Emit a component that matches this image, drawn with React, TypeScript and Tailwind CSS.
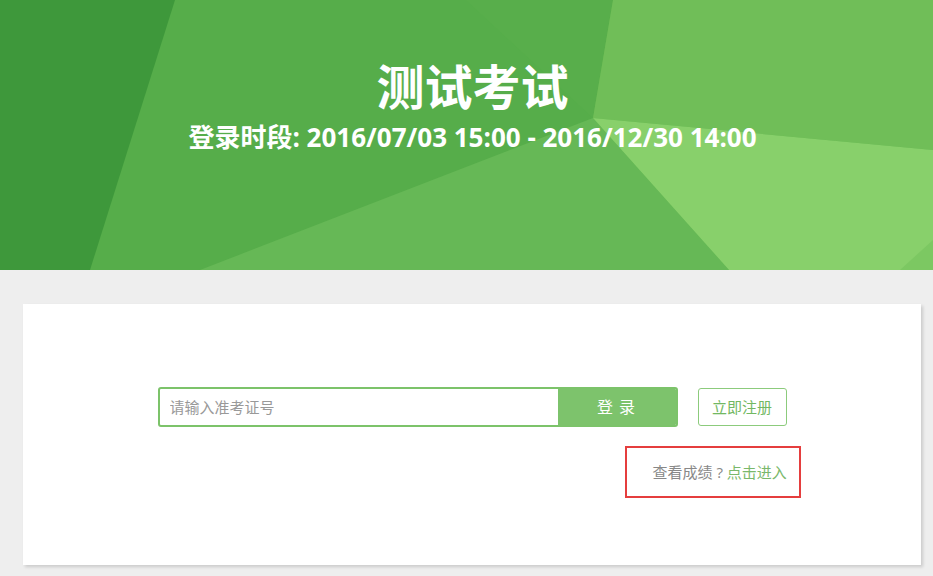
import React from 'react'

const HeaderBg = () => (
    <svg className="absolute inset-0 w-full h-full" viewBox="0 0 933 270" preserveAspectRatio="none">
        <rect x="0" y="0" width="933" height="270" fill="#56ad4a" />
        <polygon points="0,0 175,0 90,270 0,270" fill="#3e983b" />
        <polygon points="466,0 593,118 613,0" fill="#58ae4b" />
        <polygon points="200,270 466,167 593,118 729,270" fill="#66b856" />
        <polygon points="593,118 613,0 933,0 933,150" fill="#6fbd56" />
        <polygon points="613,0 933,0 933,150 593,118" fill="#72c05a" opacity="0.5" />
        <polygon points="593,118 933,150 933,270 729,270" fill="#88d06b" />
        <polygon points="900,270 933,240 933,270" fill="#7cc862" />
    </svg>
)

export default function App() {
    return (
        <div className="w-full min-h-screen bg-[#eeeeee]" style={{ fontFamily: '"Open Sans", "Noto Sans CJK SC", sans-serif' }}>
            <div className="relative h-[270px] overflow-hidden">
                <HeaderBg />
                <div className="relative flex flex-col items-center pt-[54px] pl-[12px] text-white font-bold">
                    <h1 className="text-[48px] leading-[60px]" style={{ fontFamily: '"Noto Sans CJK SC", sans-serif' }}>测试考试</h1>
                    <p className="text-[26px] leading-[32px] mt-[7px]">登录时段: 2016/07/03 15:00 - 2016/12/30 14:00</p>
                </div>
            </div>

            <div className="pt-[34px] pl-[23px] pr-[12px]">
                <div className="bg-white h-[261px] shadow-[2px_2px_3px_rgba(0,0,0,0.15)] flex flex-col items-center pt-[83px]">
                    <div className="flex items-center w-[629px]">
                        <div className="flex w-[520px] h-[40px] border-2 border-[#7cc36a] rounded-[3px] overflow-hidden">
                            <input
                                className="flex-1 px-[10px] text-[15px] text-[#555] placeholder:text-[#999] outline-none"
                                placeholder="请输入准考证号"
                            />
                            <button className="w-[118px] bg-[#7dc36c] text-white text-[16px] tracking-[1px]">登 录</button>
                        </div>
                        <button className="ml-[20px] w-[89px] h-[38px] border border-[#8ccb7c] rounded-[3px] text-[#72b862] text-[15px]">立即注册</button>
                    </div>
                    <div className="w-[629px] flex justify-end mt-[19px]">
                        <div className="w-[176px] h-[52px] border-2 border-[#e53e3e] mr-[-14px] flex items-center pl-[26px] text-[15px]">
                            <span className="text-[#888] whitespace-pre">查看成绩 ? </span>
                            <a className="text-[#7ab86b]">点击进入</a>
                        </div>
                    </div>
                </div>
            </div>
        </div>
    )
}
